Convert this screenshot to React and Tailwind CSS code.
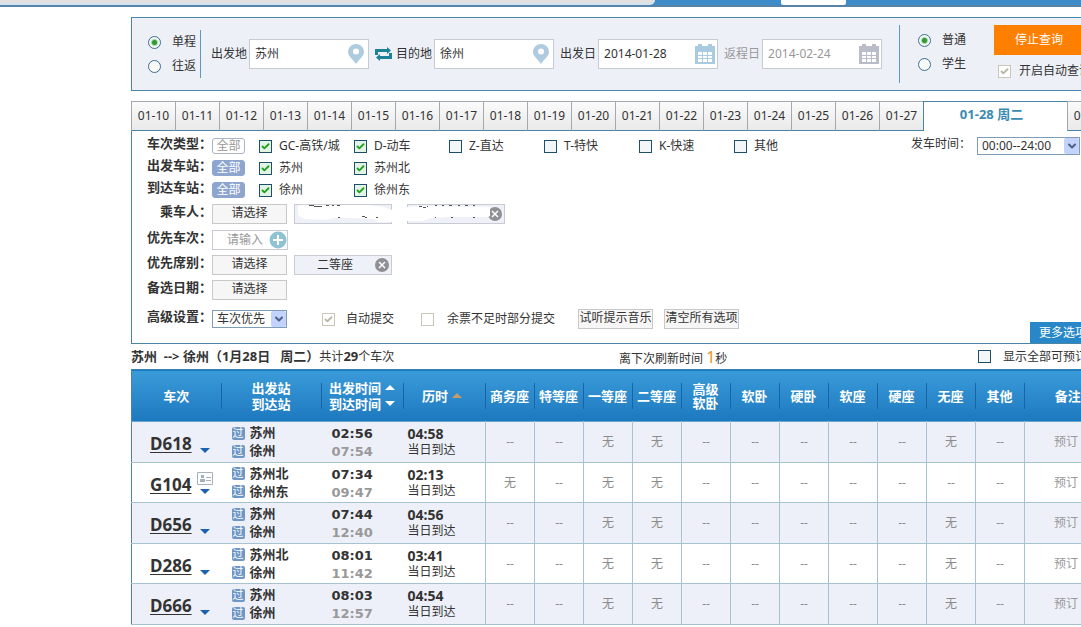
import { useState } from 'react';
import { Check, ChevronDown } from 'lucide-react';

const days = ['01-10', '01-11', '01-12', '01-13', '01-14', '01-15', '01-16', '01-17', '01-18', '01-19', '01-20', '01-21', '01-22', '01-23', '01-24', '01-25', '01-26', '01-27', '01-28 周二', '01-29'];
const activeDay = '01-28 周二';

const trainTypes = [
  { label: 'GC-高铁/城', checked: true },
  { label: 'D-动车', checked: true },
  { label: 'Z-直达', checked: false },
  { label: 'T-特快', checked: false },
  { label: 'K-快速', checked: false },
  { label: '其他', checked: false },
];

const fromStations = [
  { label: '苏州', checked: true },
  { label: '苏州北', checked: true },
];

const toStations = [
  { label: '徐州', checked: true },
  { label: '徐州东', checked: true },
];

const seatNames = ['商务座', '特等座', '一等座', '二等座', '高级软卧', '软卧', '硬卧', '软座', '硬座', '无座', '其他'];

const trains = [
  { no: 'D618', from: '苏州', to: '徐州', start: '02:56', end: '07:54', duration: '04:58', none: [2, 3, 9] },
  { no: 'G104', from: '苏州北', to: '徐州东', start: '07:34', end: '09:47', duration: '02:13', none: [0, 2, 3], idCard: true },
  { no: 'D656', from: '苏州', to: '徐州', start: '07:44', end: '12:40', duration: '04:56', none: [2, 3, 9] },
  { no: 'D286', from: '苏州北', to: '徐州', start: '08:01', end: '11:42', duration: '03:41', none: [2, 3, 9] },
  { no: 'D666', from: '苏州', to: '徐州', start: '08:03', end: '12:57', duration: '04:54', none: [2, 3, 9] },
];

const Tick = ({ label, checked, disabled, className = '', gap = 'gap-[7px]' }) => {
  const [on, setOn] = useState(!!checked);
  return (
    <label className={`flex items-center whitespace-nowrap ${gap} ${className}`}>
      <span className="relative block size-[13px] shrink-0">
        <input
          type="checkbox"
          checked={on}
          disabled={disabled}
          onChange={() => setOn(!on)}
          className="block size-[13px] appearance-none border border-[#1d4f6b] bg-[#f3f6f6] checked:bg-[#e2f5e4] disabled:border-[#c9c7ba] disabled:bg-white"
        />
        {on && (
          <Check
            className={`pointer-events-none absolute top-[2px] left-[2px] size-[9px] ${disabled ? 'text-[#b9b8a4]' : 'text-[#21a121]'}`}
            strokeWidth={5}
          />
        )}
      </span>
      {label}
    </label>
  );
};

const Radio = ({ name, label, checked }) => (
  <label className="flex items-center gap-[11px] whitespace-nowrap">
    <input
      type="radio"
      name={name}
      defaultChecked={checked}
      className="size-[13px] shrink-0 appearance-none rounded-full border border-[#3f6d8f] bg-[#f8faf8] checked:bg-[radial-gradient(circle,#2f9a35_0_2px,#a5d8a5_3px,#f4faf4_4px)]"
    />
    {label}
  </label>
);

const PinIcon = () => (
  <svg viewBox="0 0 16 20" className="h-5 w-4 shrink-0 fill-[#aecbdf]">
    <path fillRule="evenodd" d="M8 0a8 8 0 0 0-8 8c0 4 4 6.500 8 12 4-5.500 8-8 8-12a8 8 0 0 0-8-8zm0 4.500a3 3 0 1 1 0 6 3 3 0 0 1 0-6z" />
  </svg>
);

const CalendarIcon = ({ className }) => (
  <svg viewBox="0 0 20 20" className={`size-5 shrink-0 ${className}`}>
    <path d="M0 2h3V0h4v2h6V0h4v2h3v18H0z" />
    <path
      fill="#fff"
      d="M3 8h4v3H3zM8 8h4v3H8zM13 8h4v3h-4zM3 12h4v2H3zM8 12h4v2H8zM13 12h4v2h-4zM3 15h4v3H3zM8 15h4v3H8zM13 15h4v3h-4z"
    />
  </svg>
);

const SwapIcon = () => (
  <svg viewBox="0 0 17 14" className="h-[14px] w-[17px] fill-none stroke-[#1d8299]" strokeWidth="3">
    <path d="M1.500 8V3.500H13M15.500 6v4.500H4" />
    <path d="M12 0l4 3.500-4 3.500zM5 7L1 10.500 5 14z" className="fill-[#1d8299]" stroke="none" />
  </svg>
);

const CloseIcon = () => (
  <svg viewBox="0 0 14 14" className="size-[14px] shrink-0">
    <circle cx="7" cy="7" r="7" fill="#8e9094" />
    <path d="M4 4l6 6M10 4l-6 6" stroke="#fff" strokeWidth="1.500" />
  </svg>
);

const Field = ({ id, label, value, icon, muted, type = 'place' }) => (
  <div className="flex items-center gap-[2px]">
    <label htmlFor={id} className={`whitespace-nowrap ${muted ? 'text-[#999]' : ''}`}>{label}</label>
    <div className={`flex h-[30px] w-[120px] items-center border border-[#c6cbd1] bg-white pl-[5px] ${type === 'date' ? 'pr-[2px]' : 'pr-1'}`}>
      <input id={id} defaultValue={value} className={`w-0 flex-1 bg-transparent outline-none ${muted ? 'text-[#999]' : 'text-[#333]'}`} />
      {icon}
    </div>
  </div>
);

const Select = ({ id, label, value, className }) => (
  <span className={`relative block ${className}`}>
    <select id={id} aria-label={label} defaultValue={value} className="block h-[18px] w-full appearance-none border border-[#7f9db9] bg-white pl-1 leading-4">
      <option>{value}</option>
    </select>
    <span className="pointer-events-none absolute top-[1px] right-[1px] flex h-4 w-[15px] items-center justify-center rounded-xs bg-[#c3d3fb]">
      <ChevronDown className="size-3 text-[#4d6185]" strokeWidth={4} />
    </span>
  </span>
);

const Row = ({ label, className = 'h-[26px]', children }) => (
  <div className={`flex items-center ${className}`}>
    <span className="w-20 shrink-0 pb-[6px] text-right text-[13px] leading-4 font-bold whitespace-nowrap">{label}</span>
    {children}
  </div>
);

const AllTag = ({ active }) => (
  <button className={`h-4 w-[33px] shrink-0 rounded-[3px] border text-xs leading-[14px] ${active ? 'border-[#8ea5cf] bg-[#8ea5cf] text-white' : 'border-[#a9b4c8] bg-white text-[#999]'}`}>
    全部
  </button>
);

const TickGroup = ({ items }) => (
  <div className="ml-[14px] flex">
    {items.map(item => (
      <Tick key={item.label} {...item} className="w-[95px]" />
    ))}
  </div>
);

const PlainButton = ({ children }) => (
  <button className="h-5 w-[75px] shrink-0 border border-[#c8c8c8] bg-[#f6f6f6] pb-1 text-xs leading-4 whitespace-nowrap">{children}</button>
);

// passenger chips have their names painted over
const HiddenName = ({ children }) => (
  <span className="relative flex h-5 w-[98px] shrink-0 justify-end border border-[#c8ccd2] bg-[#eef1f8] pt-[2px] pr-[2px]">
    {children}
  </span>
);

const SortArrow = ({ down, className }) => (
  <svg viewBox="0 0 10 5" className={`h-[5px] w-[10px] ${className}`}>
    <path d={down ? 'M0 0h10L5 5z' : 'M0 5h10L5 0z'} />
  </svg>
);

const HeadCell = ({ children, last }) => (
  <th scope="col" className="p-0">
    <div className={`flex h-[26px] items-center justify-center text-center ${last ? '' : 'border-r border-[#1765a6]'}`}>{children}</div>
  </th>
);

const Station = ({ name }) => (
  <div className="flex h-[18px] items-center gap-[5px] text-[13px] font-bold">
    <span className="flex size-[13px] items-center justify-center rounded-xs bg-[#6f96c4] text-[11px] font-normal text-white">过</span>
    {name}
  </div>
);

const TrainRow = ({ train }) => (
  <tr className="border-b border-[#a6c3d1] odd:h-[41px] odd:bg-[#edf0f8] even:h-[40px] even:bg-white">
    <td className="p-0 pl-[18px]">
      <div className="flex items-center gap-2">
        <a href={`#${train.no}`} className="w-[42px] pt-1 text-[17px] leading-6 font-bold underline underline-offset-2">{train.no}</a>
        <div className="flex h-8 flex-col items-center justify-end gap-1 pb-[5px]">
          {train.idCard && (
            <svg viewBox="0 0 16 13" className="-mx-[3px] h-[13px] w-4 fill-none stroke-[#a5b2bd]">
              <path d="M.5.5h15v12H.5zM9 5.500h5M9 8.500h5" />
              <path d="M4 3h3v3H4zM3 7h5v3H3z" fill="#a5b2bd" stroke="none" />
            </svg>
          )}
          <SortArrow down className="fill-[#1a62b0]" />
        </div>
      </div>
    </td>
    <td className="p-0 pl-[10px]">
      <Station name={train.from} />
      <Station name={train.to} />
    </td>
    <td className="p-0 pt-[2px] pl-[10px] font-['DejaVu_Sans',sans-serif] text-[13px] leading-[18px] font-bold">
      <div>{train.start}</div>
      <div className="text-[#999]">{train.end}</div>
    </td>
    <td className="p-0 pl-1">
      <div className="text-sm leading-4 font-bold">{train.duration}</div>
      <div className="leading-4">当日到达</div>
    </td>
    {seatNames.map((name, i) => (
      <td key={name} className="border-l border-[#a6c3d1] p-0 text-center text-[#8c8c8c]">
        {train.none.includes(i) ? '无' : '--'}
      </td>
    ))}
    <td className="border-l border-[#a6c3d1] p-0 pr-1 text-center text-[#999]">预订</td>
  </tr>
);

const TopBar = () => (
  <div className="flex h-[7px] border-b-2 border-[#5683a8] bg-[#3f8ccb]">
    <div className="w-[655px] rounded-br-lg border-b-2 border-[#d3e3f1] bg-[#e2e1df]" />
    <div className="ml-[126px] w-[65px] rounded-b-xs bg-white" />
  </div>
);

const SearchBar = () => (
  <form className="mt-[10px] flex h-[74px] items-center border border-[#4a86a3] bg-[#edf0f7] pl-4">
    <div className="flex h-12 w-[53px] flex-col justify-center gap-1 border-r border-[#5b9bbd] leading-5">
      <Radio name="trip" label="单程" checked />
      <Radio name="trip" label="往返" />
    </div>
    <div className="ml-[10px] flex items-center gap-[6px]">
      <Field id="from" label="出发地" value="苏州" icon={<PinIcon />} />
      <button type="button" aria-label="交换" className="-mr-[2px]"><SwapIcon /></button>
      <Field id="to" label="目的地" value="徐州" icon={<PinIcon />} />
      <Field id="date" label="出发日" value="2014-01-28" type="date" icon={<CalendarIcon className="fill-[#a9cbe0]" />} />
      <Field id="back" label="返程日" value="2014-02-24" type="date" muted icon={<CalendarIcon className="fill-[#b9bdc9]" />} />
    </div>
    <div className="ml-[17px] flex h-[58px] flex-col justify-center gap-1 border-l border-[#5b9bbd] pr-7 pb-1 pl-[18px] leading-5">
      <Radio name="kind" label="普通" checked />
      <Radio name="kind" label="学生" />
    </div>
    <div className="flex h-[58px] flex-col gap-1">
      <button type="button" className="h-[30px] w-[90px] bg-[#ff8000] text-white">停止查询</button>
      <Tick label="开启自动查询" checked disabled gap="gap-2" className="ml-1 h-6" />
    </div>
  </form>
);

const DayTabs = () => (
  <div className="mt-[10px] flex h-[30px]">
    {days.map(day => (
      <button
        key={day}
        className={day === activeDay
          ? 'w-36 shrink-0 border-t border-l border-[#4a86a3] bg-white pr-2 pb-1 text-[13px] font-bold text-[#3a8bb0]'
          : 'w-11 shrink-0 border border-r-0 border-[#a3a9ac] border-b-[#4a86a3] bg-linear-to-b from-[#fbfbfb] to-[#e9e9ea] text-[#333]'}
      >
        {day}
      </button>
    ))}
  </div>
);

const Filters = () => (
  <div className="border border-t-0 border-[#4a86a3] bg-white pt-1">
    <Row label="车次类型：" className="h-[22px]">
      <AllTag />
      <TickGroup items={trainTypes} />
      <label htmlFor="depart" className="ml-auto pb-1 whitespace-nowrap">发车时间：</label>
      <Select id="depart" value="00:00--24:00" className="mr-[30px] ml-[6px] w-[103px]" />
    </Row>
    <Row label="出发车站：" className="h-[22px]">
      <AllTag active />
      <TickGroup items={fromStations} />
    </Row>
    <Row label="到达车站：" className="h-[22px]">
      <AllTag active />
      <TickGroup items={toStations} />
    </Row>
    <Row label="乘车人：">
      <PlainButton>请选择</PlainButton>
      <div className="ml-[7px] flex gap-[15px]">
        <HiddenName>
          <svg viewBox="0 0 98 20" className="absolute -top-px -left-px h-5 w-[98px]">
            <path d="M4 2q4-2 10-1h60l16 2 8 3v12H84l-4-3-22-1H40l-8 2-20-1q-8-1-8-6z" fill="#fff" />
            <path d="M15 1.500h5M20 2.500h8M32 1.500h3M38 1.500h2M43 1.500h3M44 13.500h2M68 12.500h3M71 13.500h2M82 13.500h2" stroke="#555" />
          </svg>
        </HiddenName>
        <HiddenName>
          <svg viewBox="0 0 98 20" className="absolute -top-px -left-px h-5 w-[98px]">
            <path d="M0 3l12-1 50 1h21v9l-2 1H40l-16 1-8 3H0z" fill="#fff" />
            <path d="M12 2.500h3M16 3.500h3M20 2.500h1M28 1.500h2M35 1.500h2M42 1.500h3M51 1.500h2M58 1.500h3M66 1.500h2M28 13.500h1M44 13.500h2M66 13.500h2" stroke="#555" />
          </svg>
          <CloseIcon />
        </HiddenName>
      </div>
    </Row>
    <Row label="优先车次：">
      <div className="flex h-5 w-[76px] items-center border border-[#c8ccd2] bg-white">
        <input placeholder="请输入" aria-label="优先车次" className="w-0 flex-1 pl-[14px] outline-none placeholder:text-[#999]" />
        <svg viewBox="0 0 18 18" className="size-[18px] shrink-0">
          <circle cx="9" cy="9" r="8.500" fill="#8fc3d3" />
          <path d="M9 4v10M4 9h10" stroke="#fff" strokeWidth="2" />
        </svg>
      </div>
    </Row>
    <Row label="优先席别：" className="h-6">
      <PlainButton>请选择</PlainButton>
      <button className="ml-[7px] flex h-5 w-[98px] items-center justify-end gap-[22px] border border-[#c8ccd2] bg-[#eef1f8] pr-[2px]">
        二等座
        <CloseIcon />
      </button>
    </Row>
    <Row label="备选日期：">
      <PlainButton>请选择</PlainButton>
    </Row>
    <div className="flex items-end justify-between">
      <Row label="高级设置：" className="mb-2 h-8">
        <Select label="高级设置" value="车次优先" className="w-[75px]" />
        <Tick label="自动提交" checked disabled gap="gap-[11px]" className="ml-[35px]" />
        <Tick label="余票不足时部分提交" disabled gap="gap-[13px]" className="mr-[23px] ml-[27px]" />
        <div className="flex gap-[11px]">
          <PlainButton>试听提示音乐</PlainButton>
          <PlainButton>清空所有选项</PlainButton>
        </div>
      </Row>
      <button className="h-[21px] w-20 bg-[#2787c8] pl-[9px] text-left text-white">更多选项</button>
    </div>
  </div>
);

const Summary = () => (
  <div className="flex h-[25px] items-center whitespace-pre">
    <p className="w-[488px]">
      <b className="text-[13px]">{'苏州  --> 徐州（1月28日   周二）'}</b>共计<b className="text-[13px]">29</b>个车次
    </p>
    <p>离下次刷新时间 <span className="text-base leading-5 text-[#e8941a]">1</span>秒</p>
    <Tick label="显示全部可预订车次" gap="gap-3" className="ml-auto" />
  </div>
);

const TrainTable = () => (
  <table className="w-full table-fixed border-collapse border-l border-[#4a86a3]">
    <colgroup>
      <col className="w-[90px]" />
      <col className="w-[100px]" />
      <col className="w-[82px]" />
      <col className="w-[82px]" />
      {seatNames.map(name => <col key={name} className="w-[49px]" />)}
      <col />
    </colgroup>
    <thead>
      <tr className="h-[52px] border-t border-b border-t-[#3383b0] border-b-[#6aa5cc] bg-linear-to-b from-[#3a9bd9] to-[#1d79bf] text-[13px] leading-4 font-bold text-white">
        <HeadCell>车次</HeadCell>
        <HeadCell>
          <div>
            <div>出发站</div>
            <div>到达站</div>
          </div>
        </HeadCell>
        <HeadCell>
          <div>
            <div className="flex items-center gap-1">出发时间<SortArrow className="fill-white" /></div>
            <div className="flex items-center gap-1">到达时间<SortArrow down className="fill-white" /></div>
          </div>
        </HeadCell>
        <HeadCell>
          <span className="flex items-center gap-1 pr-1">历时<SortArrow className="fill-[#c99a6b]" /></span>
        </HeadCell>
        {seatNames.map(name => (
          <HeadCell key={name}>
            <span className={name.length > 3 ? 'w-[26px] leading-[14px]' : 'whitespace-nowrap'}>{name}</span>
          </HeadCell>
        ))}
        <HeadCell last>备注</HeadCell>
      </tr>
    </thead>
    <tbody>
      {trains.map(train => <TrainRow key={train.no} train={train} />)}
    </tbody>
  </table>
);

export default function App() {
  return (
    <div className="h-screen overflow-hidden bg-white font-['Noto_Sans','Noto_Sans_CJK_SC',sans-serif] text-xs text-[#333]">
      <TopBar />
      <main className="ml-[131px] min-w-[980px]">
        <SearchBar />
        <DayTabs />
        <Filters />
        <Summary />
        <TrainTable />
      </main>
    </div>
  );
}
